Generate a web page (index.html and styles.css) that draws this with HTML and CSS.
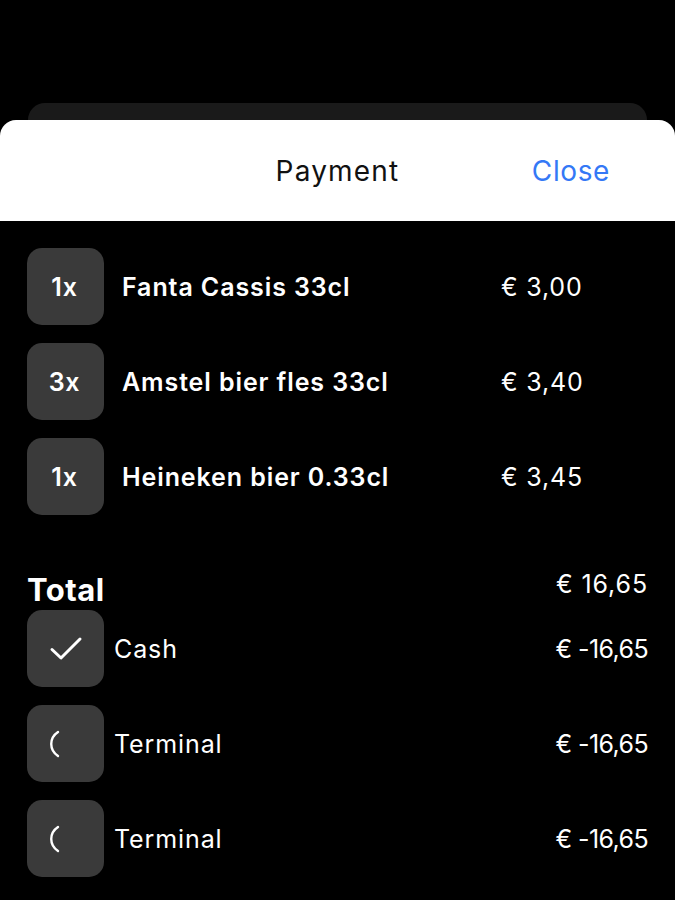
FILE: index.html
```html
<!DOCTYPE html>
<html>
<head>
<meta charset="utf-8">
<link rel="stylesheet" href="styles.css">
</head>
<body>
<div class="backcard"></div>
<div class="sheet">
  <header class="sheet-header">
    <span></span>
    <h1 class="title">Payment</h1>
    <a class="close">Close</a>
  </header>
  <main class="content">
    <ul class="items">
      <li class="item"><div class="tile qty">1x</div><span class="name">Fanta Cassis 33cl</span><span class="price">€ 3,00</span></li>
      <li class="item"><div class="tile qty">3x</div><span class="name">Amstel bier fles 33cl</span><span class="price">€ 3,40</span></li>
      <li class="item"><div class="tile qty">1x</div><span class="name">Heineken bier 0.33cl</span><span class="price">€ 3,45</span></li>
    </ul>
    <div class="total">
      <span class="total-label">Total</span>
      <span class="total-value">€ 16,65</span>
    </div>
    <ul class="payments">
      <li class="payment">
        <div class="tile"><svg width="34" height="26" viewBox="0 0 34 26"><path d="M3 13.5 L12 22 L31 3" fill="none" stroke="#fff" stroke-width="3" stroke-linecap="round" stroke-linejoin="round"/></svg></div>
        <span class="method">Cash</span><span class="amount">€ -16,65</span>
      </li>
      <li class="payment">
        <div class="tile"><svg class="arc" width="34" height="30" viewBox="0 0 34 30"><path d="M13 3 C4 9 4 21 13 27" fill="none" stroke="#fff" stroke-width="2.4" stroke-linecap="round"/></svg></div>
        <span class="method">Terminal</span><span class="amount">€ -16,65</span>
      </li>
      <li class="payment">
        <div class="tile"><svg class="arc" width="34" height="30" viewBox="0 0 34 30"><path d="M13 3 C4 9 4 21 13 27" fill="none" stroke="#fff" stroke-width="2.4" stroke-linecap="round"/></svg></div>
        <span class="method">Terminal</span><span class="amount">€ -16,65</span>
      </li>
    </ul>
  </main>
</div>
</body>
</html>
```
FILE: styles.css
```css
* { box-sizing: border-box; }
html, body { margin: 0; padding: 0; background: #000; }
body {
  font-family: Inter, "Open Sans", "Liberation Sans", sans-serif;
  color: #fff;
  width: 675px;
  height: 900px;
  overflow: hidden;
}
ul { list-style: none; margin: 0; padding: 0; }

.backcard {
  margin: 103px 28px 0;
  height: 17px;
  background: #1a1a1a;
  border-radius: 20px 20px 0 0;
}

.sheet-header {
  height: 101px;
  background: #fff;
  border-radius: 16px 16px 0 0;
  display: grid;
  grid-template-columns: 1fr auto 1fr;
  align-items: center;
}
.title {
  margin: 0;
  font-size: 28px;
  font-weight: 400;
  color: #111;
  letter-spacing: 1.2px;
}
.close {
  justify-self: end;
  margin-right: 65px;
  font-size: 28px;
  letter-spacing: 0.6px;
  color: #3478f6;
}

.content { padding: 27px 27px 0 27px; }

.items { display: flex; flex-direction: column; gap: 18px; }
.item { display: flex; align-items: center; height: 77px; }
.tile {
  width: 77px;
  height: 77px;
  flex: none;
  background: #3a3a3a;
  border-radius: 15px;
  display: flex;
  align-items: center;
  justify-content: center;
}
.qty { font-size: 25px; font-weight: 600; letter-spacing: 0.8px; padding-right: 2px; }
.name {
  margin-left: 18px;
  width: 379px;
  font-size: 25px;
  font-weight: 600;
  letter-spacing: 0.9px;
}
.price { font-size: 25px; font-weight: 400; letter-spacing: 0.8px; }

.total {
  display: flex;
  justify-content: space-between;
  align-items: flex-start;
  margin-top: 50px;
  height: 45px;
}
.total-label { font-size: 31px; font-weight: 700; line-height: 36px; padding-top: 7px; letter-spacing: 0.5px; }
.total-value { font-size: 25px; line-height: 28px; padding-top: 5px; letter-spacing: 0.9px; }

.payments { display: flex; flex-direction: column; gap: 18px; }
.payment { display: flex; align-items: center; height: 77px; }
.method { margin-left: 10px; flex: 1; font-size: 25px; letter-spacing: 0.9px; }
.amount { font-size: 25px; letter-spacing: -0.6px; }
.arc { margin-left: -8px; }
```
